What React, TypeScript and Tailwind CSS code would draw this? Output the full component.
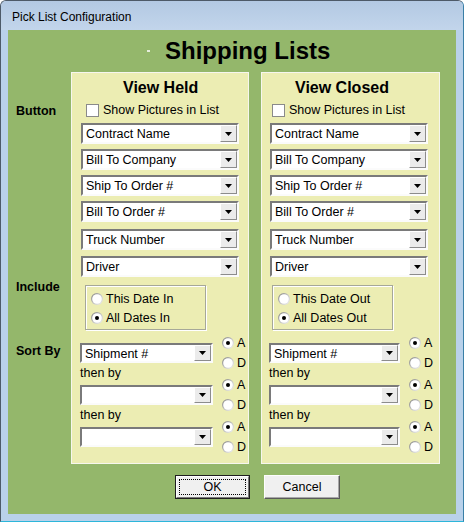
import React from "react";

function Radio({ checked }: { checked?: boolean }) {
  return (
    <svg width="12" height="12" viewBox="0 0 12 12" className="shrink-0 block">
      <defs>
        <linearGradient id="rgring" x1="0" y1="0" x2="1" y2="1">
          <stop offset="0" stopColor="#7d7d7d" />
          <stop offset="0.55" stopColor="#c8c8c8" />
          <stop offset="1" stopColor="#f2f2f2" />
        </linearGradient>
      </defs>
      <circle cx="6" cy="6" r="6" fill="url(#rgring)" />
      <circle cx="6" cy="6" r="4.8" fill="#ffffff" />
      {checked && <circle cx="6" cy="6" r="2" fill="#000000" />}
    </svg>
  );
}

function Combo({ text, className }: { text?: string; className: string }) {
  return (
    <div
      className={`flex shrink-0 border-2 border-t-[#7a7a7a] border-l-[#7a7a7a] border-b-[#fbfbfb] border-r-[#fbfbfb] bg-white ${className}`}
    >
      <div className="flex-1 self-center pl-[3px] pt-[1px] text-[12.5px] leading-[14px] text-black whitespace-nowrap overflow-hidden">
        {text}
      </div>
      <div className="w-[17px] flex items-center justify-center bg-[#ebebeb] border border-t-white border-l-white border-b-[#8c8c8c] border-r-[#8c8c8c]">
        <svg width="7" height="4" viewBox="0 0 7 4" className="block">
          <path d="M0 0H7L3.5 4Z" fill="#000" />
        </svg>
      </div>
    </div>
  );
}

function RadioRow({ label, checked }: { label: string; checked?: boolean }) {
  return (
    <div className="flex items-center gap-[3px] h-[18px]">
      <Radio checked={checked} />
      <span className="text-[12.5px] leading-[14px] text-black whitespace-nowrap">{label}</span>
    </div>
  );
}

function SortRow({ text, comboClass, radioClass }: { text?: string; comboClass: string; radioClass: string }) {
  return (
    <div className="flex items-center h-[20px]">
      <Combo text={text} className={comboClass} />
      <div className={`flex flex-col gap-[6px] ${radioClass}`}>
        <div className="flex items-center gap-[3px] h-[14px]">
          <Radio checked />
          <span className="text-[12.5px] leading-[14px] text-black">A</span>
        </div>
        <div className="flex items-center gap-[3px] h-[14px]">
          <Radio />
          <span className="text-[12.5px] leading-[14px] text-black">D</span>
        </div>
      </div>
    </div>
  );
}

function Panel({
  title,
  titleClass,
  widthClass,
  cbClass,
  comboClass,
  groupClass,
  sortClass,
  sortRadioClass,
  thenClass,
  r1,
  r2,
}: {
  title: string;
  titleClass: string;
  widthClass: string;
  cbClass: string;
  comboClass: string;
  groupClass: string;
  sortClass: string;
  sortRadioClass: string;
  thenClass: string;
  r1: string;
  r2: string;
}) {
  const items = ["Contract Name", "Bill To Company", "Ship To Order #", "Bill To Order #"];
  return (
    <div className={`flex flex-col shrink-0 bg-[#ecedb3] border border-[#f6f6ee] pt-[6px] pb-[16px] ${widthClass}`}>
      <div className={`h-[18px] text-[16px] leading-[18px] font-bold text-black whitespace-nowrap ${titleClass}`}>
        {title}
      </div>
      <div className={`flex items-center gap-[4px] h-[14px] mt-[6px] ${cbClass}`}>
        <div className="w-[13px] h-[13px] bg-white border border-[#8a8a8a] shrink-0" />
        <span className="text-[12.5px] leading-[14px] text-black whitespace-nowrap">Show Pictures in List</span>
      </div>
      <div className="flex flex-col gap-[5px] mt-[6px]">
        {items.map((t) => (
          <Combo key={t} text={t} className={`h-[21px] w-[158px] ${comboClass}`} />
        ))}
      </div>
      <Combo text="Truck Number" className={`h-[21px] w-[158px] mt-[7px] ${comboClass}`} />
      <Combo text="Driver" className={`h-[21px] w-[158px] mt-[6px] ${comboClass}`} />
      <div
        className={`flex flex-col gap-[1px] h-[45px] w-[121px] mt-[8px] pt-[4px] pl-[5px] border border-[#a6a898] shadow-[inset_1px_1px_0_#ffffff,1px_1px_0_#ffffff] ${groupClass}`}
      >
        <RadioRow label={r1} />
        <RadioRow label={r2} checked />
      </div>
      <div className="flex flex-col mt-[13px]">
        <SortRow text="Shipment #" comboClass={`h-[20px] ${sortClass}`} radioClass={sortRadioClass} />
        <div className={`h-[14px] mt-[3px] text-[12.5px] leading-[14px] text-black ${thenClass}`}>then by</div>
        <div className="mt-[5px]">
          <SortRow comboClass={`h-[20px] ${sortClass}`} radioClass={sortRadioClass} />
        </div>
        <div className={`h-[14px] mt-[3px] text-[12.5px] leading-[14px] text-black ${thenClass}`}>then by</div>
        <div className="mt-[5px]">
          <SortRow comboClass={`h-[20px] ${sortClass}`} radioClass={sortRadioClass} />
        </div>
      </div>
    </div>
  );
}

export default function App() {
  return (
    <div className="w-[464px] h-[522px] flex flex-col overflow-hidden rounded-t-[6px] border border-[#4d5a68] border-b-[#2cb6da] border-r-[#3a7fa6] bg-[#b9d1ea] font-['Liberation_Sans',Arial,sans-serif] text-black">
      {/* title bar */}
      <div className="h-[29px] shrink-0 pl-[11px] pt-[9px] bg-[linear-gradient(to_bottom,#b3c9e3,#c2d5eb)]">
        <div className="text-[12px] leading-[14px] text-black">Pick List Configuration</div>
      </div>
      {/* client area */}
      <div className="flex-1 flex flex-col px-[7px] pb-[7px]">
        <div className="flex-1 flex flex-col bg-[#94b76b] pt-[8px]">
          <div className="h-[26px] flex items-center">
            <div className="ml-[139px] w-[3px] h-[2px] bg-[#e6eddc]" />
            <div className="ml-[15px] text-[24px] leading-[26px] font-bold text-black whitespace-nowrap">
              Shipping Lists
            </div>
          </div>
          <div className="flex items-start mt-[8px]">
            <div className="w-[63px] shrink-0 flex flex-col pl-[8px]">
              <div className="mt-[32px] h-[14px] text-[12.5px] leading-[14px] font-bold">Button</div>
              <div className="mt-[162px] h-[14px] text-[12.5px] leading-[14px] font-bold">Include</div>
              <div className="mt-[50px] h-[14px] text-[12.5px] leading-[14px] font-bold">Sort By</div>
            </div>
            <Panel
              title="View Held"
              titleClass="pl-[51px]"
              widthClass="w-[178px]"
              cbClass="ml-[14px]"
              comboClass="ml-[9px]"
              groupClass="ml-[13px]"
              sortClass="w-[133px] ml-[8px]"
              sortRadioClass="ml-[9px]"
              thenClass="ml-[8px]"
              r1="This Date In"
              r2="All Dates In"
            />
            <div className="w-[12px] shrink-0" />
            <Panel
              title="View Closed"
              titleClass="pl-[33px]"
              widthClass="w-[179px]"
              cbClass="ml-[10px]"
              comboClass="ml-[8px]"
              groupClass="ml-[10px]"
              sortClass="w-[131px] ml-[7px]"
              sortRadioClass="ml-[9px]"
              thenClass="ml-[7px]"
              r1="This Date Out"
              r2="All Dates Out"
            />
          </div>
          <div className="flex gap-[14px] pl-[167px] mt-[11px]">
            <div className="w-[75px] h-[24px] flex border border-[#1e1e1e]">
              <div className="flex-1 flex p-[2px] bg-[#f0f0f0] border border-t-white border-l-white border-b-[#7a7a7a] border-r-[#7a7a7a]">
                <div className="flex-1 flex items-center justify-center border border-dotted border-black text-[12.5px] leading-[14px]">
                  OK
                </div>
              </div>
            </div>
            <div className="w-[76px] h-[24px] flex items-center justify-center bg-[#f0f0f0] border border-t-[#fdfdfd] border-l-[#fdfdfd] border-b-[#5a5a5a] border-r-[#5a5a5a] shadow-[inset_-1px_-1px_0_#a8a8a8] text-[12.5px] leading-[14px]">
              Cancel
            </div>
          </div>
        </div>
      </div>
    </div>
  );
}
